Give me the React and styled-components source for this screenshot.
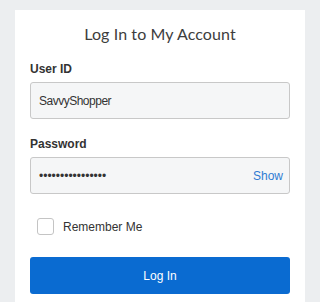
import React from "react";
import styled, { createGlobalStyle } from "styled-components";

const Global = createGlobalStyle`
  html, body { margin: 0; padding: 0; background: #eceef0; }
  body { font-family: "Liberation Sans", Arial, sans-serif; color: #333; }
  * { box-sizing: border-box; }
`;

const Page = styled.div`
  width: 320px;
  height: 302px;
  overflow: hidden;
  padding: 10px 15px 0;
`;

const Card = styled.div`
  background: #fff;
  height: 100%;
  padding: 12px 15px 0;
`;

const Title = styled.h1`
  margin: 0 0 15px;
  font-family: Lato, "Open Sans", sans-serif;
  font-weight: 400;
  font-size: 16px;
  line-height: 24px;
  letter-spacing: 0.1px;
  text-align: center;
  color: #3d3d3d;
`;

const Field = styled.div`
  margin-bottom: ${(p) => p.$gap}px;
`;

const Label = styled.label`
  display: block;
  font-weight: 700;
  font-size: 12px;
  line-height: 16px;
  margin-bottom: 5px;
  color: #333;
`;

const InputWrap = styled.div`
  position: relative;
`;

const Input = styled.input`
  display: block;
  width: 100%;
  height: 37px;
  border: 1px solid #c8c8c8;
  border-radius: 3px;
  background: #f5f6f7;
  padding: 0 8px;
  font-family: "Liberation Sans", Arial, sans-serif;
  font-size: 12px;
  letter-spacing: ${(p) => p.$ls || 0}px;
  color: #333;
  outline: none;
`;

const Show = styled.button`
  position: absolute;
  right: 7px;
  top: 50%;
  transform: translateY(-50%);
  border: 0;
  background: none;
  padding: 0;
  font-family: "Liberation Sans", Arial, sans-serif;
  font-size: 12px;
  color: #2f7bd3;
  cursor: pointer;
`;

const CheckRow = styled.label`
  display: flex;
  align-items: center;
  gap: 9px;
  margin: 0 0 22px 7px;
  font-size: 12px;
  color: #333;
`;

const Box = styled.span`
  width: 17px;
  height: 17px;
  border: 1px solid #c4c4c4;
  border-radius: 3px;
  background: #fff;
`;

const Submit = styled.button`
  display: block;
  width: 100%;
  height: 37px;
  border: 0;
  border-radius: 3px;
  background: #0a6bd1;
  color: #fff;
  font-family: "Liberation Sans", Arial, sans-serif;
  font-size: 12px;
  cursor: pointer;
`;

export default function App() {
  return (
    <>
      <Global />
      <Page>
        <Card>
          <Title>Log In to My Account</Title>
          <Field $gap={17}>
            <Label>User ID</Label>
            <Input $ls={-0.5} readOnly value="SavvyShopper" />
          </Field>
          <Field $gap={24}>
            <Label>Password</Label>
            <InputWrap>
              <Input type="password" readOnly value="abcdefghijklmnop" />
              <Show type="button">Show</Show>
            </InputWrap>
          </Field>
          <CheckRow>
            <Box />
            Remember Me
          </CheckRow>
          <Submit type="button">Log In</Submit>
        </Card>
      </Page>
    </>
  );
}
